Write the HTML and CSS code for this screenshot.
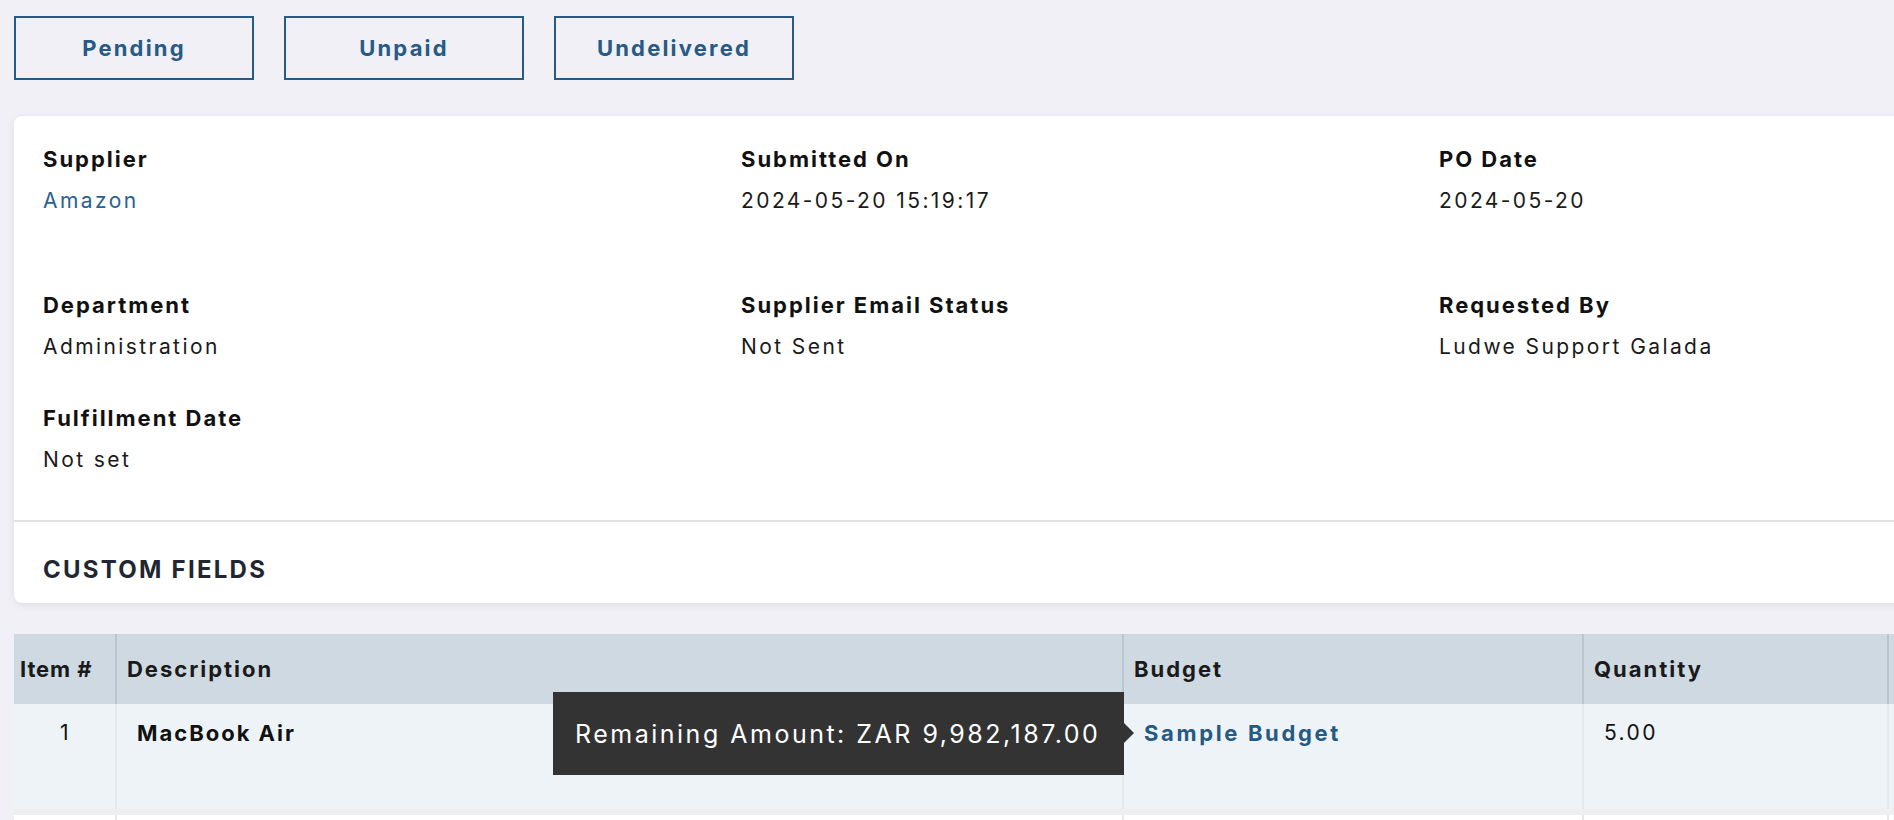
FILE: index.html
```html
<!DOCTYPE html>
<html>
<head>
<link rel="stylesheet" href="styles.css">
</head>
<body>
    <div class="page">
        <div class="status-filters">
            <button class="filter-btn">Pending</button>
            <button class="filter-btn">Unpaid</button>
            <button class="filter-btn">Undelivered</button>
        </div>

        <div class="card">
            <div class="details">
                <div class="field field-top">
                    <div class="field-label">Supplier</div>
                    <a class="field-value link" href="#">Amazon</a>
                </div>
                <div class="field field-top">
                    <div class="field-label">Submitted On</div>
                    <div class="field-value">2024-05-20 15:19:17</div>
                </div>
                <div class="field field-top">
                    <div class="field-label">PO Date</div>
                    <div class="field-value">2024-05-20</div>
                </div>

                <div class="field">
                    <div class="field-label">Department</div>
                    <div class="field-value">Administration</div>
                </div>
                <div class="field">
                    <div class="field-label">Supplier Email Status</div>
                    <div class="field-value">Not Sent</div>
                </div>
                <div class="field">
                    <div class="field-label">Requested By</div>
                    <div class="field-value">Ludwe Support Galada</div>
                </div>

                <div class="field">
                    <div class="field-label">Fulfillment Date</div>
                    <div class="field-value">Not set</div>
                </div>
            </div>
            <div class="custom-fields">
                <h3>CUSTOM FIELDS</h3>
            </div>
        </div>

        <table class="items">
            <thead>
                <tr>
                    <th class="col-num">Item #</th>
                    <th class="col-desc">Description</th>
                    <th class="col-budget">Budget</th>
                    <th class="col-qty">Quantity</th>
                    <th class="col-rest"></th>
                </tr>
            </thead>
            <tbody>
                <tr>
                    <td class="num">1</td>
                    <td class="desc">MacBook Air</td>
                    <td class="budget">
                        <div class="tooltip">Remaining Amount: ZAR 9,982,187.00</div>
                        <a class="budget-link" href="#">Sample Budget</a>
                    </td>
                    <td>5.00</td>
                    <td></td>
                </tr>
                <tr class="blank-row">
                    <td></td><td></td><td></td><td></td><td></td>
                </tr>
            </tbody>
        </table>
    </div>
</body>
</html>
```

FILE: styles.css
```css
html, body {
    overflow: hidden;
}

body {
    margin: 0;
    font-family: Inter, "Noto Sans", sans-serif;
    font-size: 21px;
    letter-spacing: 0.115em;
    background-color: #F0F0F6;
    color: #111;
}

.page {
    width: 2200px;
    padding: 16px 0 0 14px;
}

.status-filters {
    display: flex;
    gap: 30px;
}

.filter-btn {
    width: 240px;
    height: 64px;
    background: transparent;
    border: 2px solid #275A87;
    color: #275A87;
    font-family: inherit;
    font-size: 22px;
    font-weight: 700;
    letter-spacing: 0.1em;
    cursor: pointer;
}

.card {
    margin-top: 36px;
    width: 2154px;
    background-color: #FFF;
    border-radius: 8px;
    box-shadow: 0px 2px 8px rgba(0, 0, 0, 0.08);
}

.details {
    display: grid;
    grid-template-columns: 698px 698px 698px;
    row-gap: 47px;
    padding: 31px 29px 48px;
}

.field-top {
    min-height: 99px;
}

.field-label {
    font-size: 22px;
    font-weight: 700;
    line-height: 24px;
    letter-spacing: 0.09em;
    color: #111;
}

.field-value {
    display: block;
    margin-top: 18px;
    line-height: 24px;
    color: #1A1A1A;
}

.link {
    color: #2A6190;
    text-decoration: none;
}

.custom-fields {
    border-top: 2px solid #E2E2E4;
    padding: 36px 29px 21px;
}

.custom-fields h3 {
    margin: 0;
    font-size: 24px;
    line-height: 24px;
    font-weight: 700;
    letter-spacing: 0.094em;
    color: #222633;
}

.items {
    margin-top: 31px;
    border-collapse: collapse;
    table-layout: fixed;
    width: 2160px;
}

.items th {
    box-sizing: border-box;
    height: 70px;
    padding: 0 10px;
    background-color: #CFD9E2;
    border-left: 2px solid #B9C6D1;
    text-align: left;
    font-size: 22px;
    font-weight: 700;
    letter-spacing: 0.09em;
    color: #1A1A1A;
}

.items th:first-child {
    border-left: none;
    padding-left: 6px;
    letter-spacing: 0.04em;
}

.col-num { width: 102px; }
.col-desc { width: 1007px; }
.col-budget { width: 460px; }
.col-qty { width: 305px; }

.items td {
    height: 108px;
    padding: 17px 20px 0;
    vertical-align: top;
    background-color: #EEF3F7;
    border-left: 2px solid #E6E9EC;
    border-bottom: 6px solid #EFEFEF;
    line-height: 24px;
    box-sizing: border-box;
}

.items td:first-child {
    border-left: none;
}

.items td.num {
    text-align: center;
    padding: 17px 0 0 2px;
}

.items td.desc {
    font-size: 22px;
    font-weight: 700;
    letter-spacing: 0.09em;
}

.items td.budget {
    position: relative;
}

.budget-link {
    font-size: 22px;
    font-weight: 700;
    letter-spacing: 0.12em;
    color: #255A85;
    text-decoration: none;
}

.blank-row td {
    background-color: #FFF;
}

/* hover hint for the budget link, pinned to the cell's left edge */
.tooltip {
    position: absolute;
    right: 100%;
    top: -12px;
    width: 571px;
    height: 83px;
    box-sizing: border-box;
    padding: 0 0 0 22px;
    display: flex;
    align-items: center;
    background-color: #333;
    color: #FFF;
    font-size: 25px;
    font-weight: 400;
    letter-spacing: 0.1em;
    white-space: nowrap;
}

.tooltip::after {
    content: "";
    position: absolute;
    left: 100%;
    top: 31px;
    border-style: solid;
    border-width: 10px 0 10px 10px;
    border-color: transparent transparent transparent #333;
}
```
